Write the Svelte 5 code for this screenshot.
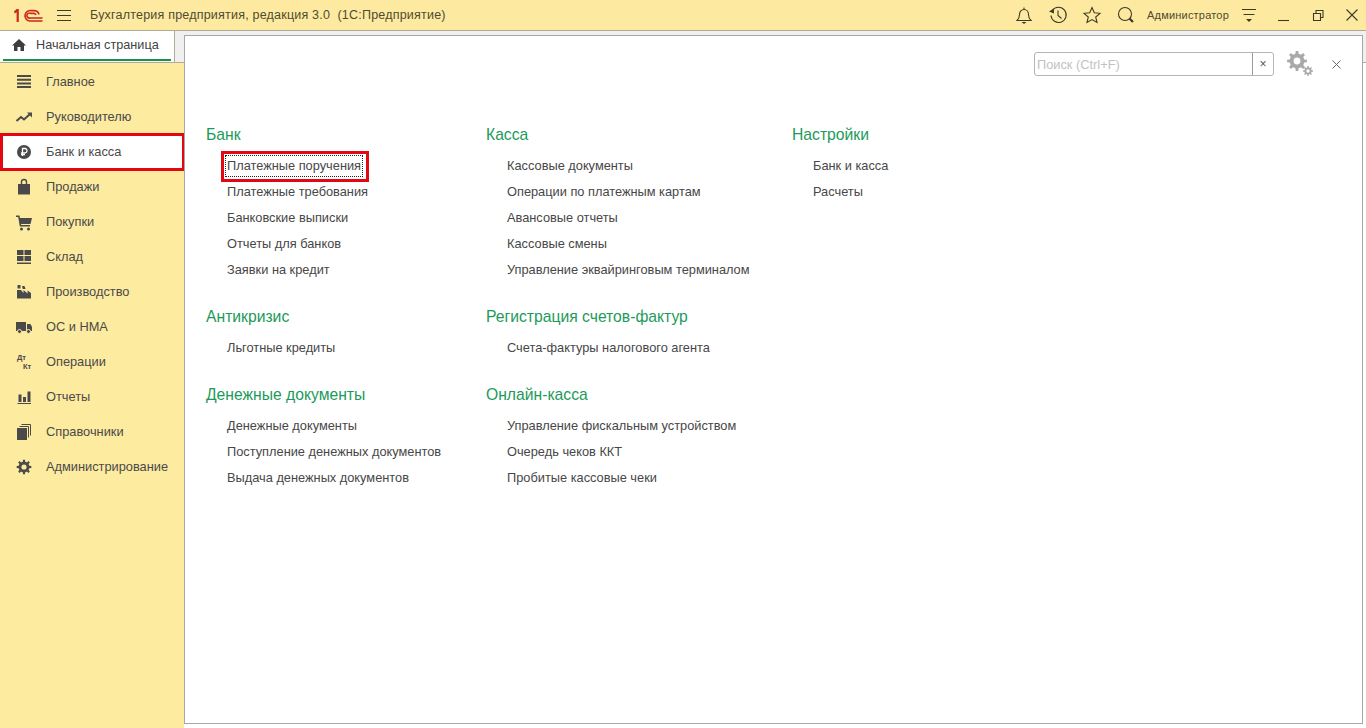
<script>
  function gear(cx, cy, R, r, hole, teeth = 8) {
    let d = '';
    const step = (Math.PI * 2) / teeth;
    for (let i = 0; i < teeth; i++) {
      const a = i * step;
      const pts = [
        [r, a - step * 0.5],
        [r, a - step * 0.27],
        [R, a - step * 0.17],
        [R, a + step * 0.17],
        [r, a + step * 0.27]
      ];
      for (const [rad, t] of pts) {
        d += (d ? 'L' : 'M') + (cx + rad * Math.cos(t)).toFixed(2) + ' ' + (cy + rad * Math.sin(t)).toFixed(2);
      }
    }
    d += `Z M${cx - hole} ${cy}a${hole} ${hole} 0 1 0 ${hole * 2} 0a${hole} ${hole} 0 1 0 ${-hole * 2} 0Z`;
    return d;
  }

  const nav = [
    { label: 'Главное', icon: 'menu' },
    { label: 'Руководителю', icon: 'trend' },
    { label: 'Банк и касса', icon: 'ruble', active: true },
    { label: 'Продажи', icon: 'bag' },
    { label: 'Покупки', icon: 'cart' },
    { label: 'Склад', icon: 'grid' },
    { label: 'Производство', icon: 'factory' },
    { label: 'ОС и НМА', icon: 'truck' },
    { label: 'Операции', icon: 'dtkt' },
    { label: 'Отчеты', icon: 'bars' },
    { label: 'Справочники', icon: 'books' },
    { label: 'Администрирование', icon: 'gear' }
  ];

  const columns = [
    [
      { title: 'Банк', links: ['Платежные поручения', 'Платежные требования', 'Банковские выписки', 'Отчеты для банков', 'Заявки на кредит'] },
      { title: 'Антикризис', links: ['Льготные кредиты'] },
      { title: 'Денежные документы', links: ['Денежные документы', 'Поступление денежных документов', 'Выдача денежных документов'] }
    ],
    [
      { title: 'Касса', links: ['Кассовые документы', 'Операции по платежным картам', 'Авансовые отчеты', 'Кассовые смены', 'Управление эквайринговым терминалом'] },
      { title: 'Регистрация счетов-фактур', links: ['Счета-фактуры налогового агента'] },
      { title: 'Онлайн-касса', links: ['Управление фискальным устройством', 'Очередь чеков ККТ', 'Пробитые кассовые чеки'] }
    ],
    [
      { title: 'Настройки', links: ['Банк и касса', 'Расчеты'] }
    ]
  ];

  const navGear = gear(10, 10, 7.4, 5.4, 2.6);
  const bigGear = gear(11, 10, 10, 7.4, 3.4);
  const smallGear = gear(22, 20, 5, 3.6, 1.7);
</script>

<div class="shell">
  <header class="topbar">
    <svg class="logo" viewBox="0 0 30 15" width="30" height="15" aria-hidden="true">
      <path class="logo-red" d="M1 3.500 3.600 1H5.800V14H3.600V4.200L1.600 5.600Z" />
      <path class="logo-line" d="M29.500 13H16.500A5.200 5.200 0 1 1 18 2.600H21.500A5 5 0 0 1 26 6.500" />
      <path class="logo-line" d="M29.500 10H17A2.500 2.500 0 1 1 17.600 5.400H21A2.600 2.600 0 0 1 23 7" />
    </svg>
    <svg class="burger" viewBox="0 0 14 11" width="14" height="11" aria-hidden="true">
      <path d="M0 .5H14M0 5.500H14M0 10.500H14" />
    </svg>
    <span class="title">Бухгалтерия предприятия, редакция 3.0&nbsp; (1С:Предприятие)</span>
    <div class="tools">
      <svg class="tool" viewBox="0 0 20 20" aria-hidden="true">
        <path d="M3 15.500C5 13.500 5.500 12 5.500 9.500C5.500 6.500 7.500 4.500 10 4.500S14.500 6.500 14.500 9.500C14.500 12 15 13.500 17 15.500ZM10 2.500V4.500" />
        <path class="solid" d="M7.500 17H12.500L10 19Z" />
      </svg>
      <svg class="tool" viewBox="0 0 20 20" aria-hidden="true">
        <path d="M4.300 5.600A7.600 7.600 0 1 1 3 10.500" />
        <path class="solid" d="M1 6.500 5.800 3.500 6 8.500Z" />
        <path d="M10 5.500V10.500L13.500 13.500" />
      </svg>
      <svg class="tool" viewBox="0 0 20 20" aria-hidden="true">
        <path d="M10 2.500 12.300 7.700 18 8.300 13.700 12 15 17.500 10 14.600 5 17.500 6.300 12 2 8.300 7.700 7.700Z" />
      </svg>
      <svg class="tool" viewBox="0 0 20 20" aria-hidden="true">
        <circle cx="9" cy="9" r="6.500" />
        <path class="thick" d="M13.500 13.500 17 17" />
      </svg>
      <span class="user">Администратор</span>
      <svg class="tool filter" viewBox="0 0 16 16" aria-hidden="true">
        <path d="M1 2.500H15M2.500 7.500H13.500" />
        <path class="solid" d="M5 12H11L8 15Z" />
      </svg>
      <div class="win">
        <svg viewBox="0 0 14 14" width="14" height="14" aria-hidden="true"><path d="M1 12.500H12" /></svg>
        <svg viewBox="0 0 14 14" width="14" height="14" aria-hidden="true"><path d="M2.500 5.500H9.500V12.500H2.500ZM5 5.500V2.500H12V9.500H9.500" /></svg>
        <svg viewBox="0 0 14 14" width="14" height="14" aria-hidden="true"><path d="M1.500 1.500 12.500 12.500M12.500 1.500 1.500 12.500" /></svg>
      </div>
    </div>
  </header>

  <div class="body">
    <aside class="side">
      <div class="tabrow">
        <div class="tab">
          <svg viewBox="0 0 14 12" width="14" height="12" aria-hidden="true">
            <path d="M7 0 14 6.500H12V12H8.500V8H5.500V12H2V6.500H0Z" />
          </svg>
          <span>Начальная страница</span>
        </div>
      </div>
      <nav class="nav">
        {#each nav as item}
          <div class="nav-item" class:active={item.active}>
            <svg class="nav-icon" viewBox="0 0 20 20" width="20" height="20" aria-hidden="true">
              {#if item.icon === 'menu'}
                <path d="M3 3H17V5H3ZM3 6.700H17V8.700H3ZM3 10.400H17V12.400H3ZM3 14.100H17V16.100H3Z" />
              {:else if item.icon === 'trend'}
                <path class="line" d="M2.500 14 7 10 10 12.500 15.500 7.500" />
                <path d="M13 5.500H18V10.500Z" />
              {:else if item.icon === 'ruble'}
                <circle cx="10" cy="10" r="7" />
                <path class="ruble" d="M8.500 14V6.500H11.300A2.200 2.200 0 0 1 11.300 10.800H7M7 12.500H11" />
              {:else if item.icon === 'bag'}
                <path d="M4 7H16V17.500H4Z" />
                <path class="line thin-bag" d="M7.500 9V5A2.500 2.500 0 0 1 12.500 5V9" />
              {:else if item.icon === 'cart'}
                <path d="M2 3.500H5.500L6 6H18L16.500 12H7L7.200 13H16V14.500H5.800L4.200 5H2Z" />
                <circle cx="7.500" cy="17" r="1.500" />
                <circle cx="14.500" cy="17" r="1.500" />
              {:else if item.icon === 'grid'}
                <path d="M3 3H9.500V8H3ZM10.500 3H17V8H10.500ZM3 9H9.500V14H3ZM10.500 9H17V14H10.500ZM3 15.500H17V17H3Z" />
              {:else if item.icon === 'factory'}
                <path d="M3 16.500V8H7L9.500 11V8L13.500 11.500V8.500L17 11V16.500Z" />
                <path d="M3.500 3H6.500V6.500H3.500ZM8 4H10.500L11.500 7H8.800Z" />
              {:else if item.icon === 'truck'}
                <path d="M2 5H12V14H2ZM13 7H16.500L18 10V14H13Z" />
                <circle class="wheel" cx="5.500" cy="14.500" r="2" />
                <circle class="wheel" cx="14.500" cy="14.500" r="2" />
              {:else if item.icon === 'dtkt'}
                <text class="dk" x="3" y="8">Дт</text>
                <text class="dk" x="9" y="16.500">Кт</text>
              {:else if item.icon === 'bars'}
                <path d="M4.500 7.500H7.500V15H4.500ZM9 10H12V15H9ZM13.500 4.500H16.500V15H13.500ZM3.500 16H17V17H3.500Z" />
              {:else if item.icon === 'books'}
                <path d="M3 6H13V18H3Z" />
                <path class="line thin" d="M5.500 4.500H14.500V15.500M7.500 2.500H16.500V13.500" />
              {:else if item.icon === 'gear'}
                <path fill-rule="evenodd" d={navGear} />
              {/if}
            </svg>
            <span>{item.label}</span>
          </div>
        {/each}
      </nav>
    </aside>

    <div class="work">
      <main class="panel">
        <div class="panel-tools">
          <div class="search">
            <span class="placeholder">Поиск (Ctrl+F)</span>
            <span class="clear">×</span>
          </div>
          <svg class="gears" viewBox="0 0 28 26" width="28" height="26" aria-hidden="true">
            <path fill-rule="evenodd" d={bigGear} />
            <path fill-rule="evenodd" d={smallGear} />
          </svg>
          <svg class="close" viewBox="0 0 9 9" width="9" height="9" aria-hidden="true">
            <path d="M.5 .5 8.500 8.500M8.500 .5 .5 8.500" />
          </svg>
        </div>
        <div class="columns">
          {#each columns as col}
            <div class="col">
              {#each col as sec}
                <section>
                  <h3>{sec.title}</h3>
                  <ul>
                    {#each sec.links as link}
                      <li>
                        {#if link === 'Платежные поручения'}
                          <span class="focused">{link}</span>
                        {:else}
                          {link}
                        {/if}
                      </li>
                    {/each}
                  </ul>
                </section>
              {/each}
            </div>
          {/each}
        </div>
      </main>
    </div>
  </div>
</div>

<style>
  :global(body) {
    margin: 0;
    background: #fff;
    overflow: hidden;
  }
  .shell {
    width: 1366px;
    height: 728px;
    display: flex;
    flex-direction: column;
    font-family: "Liberation Sans", Arial, sans-serif;
    font-size: 13px;
    color: #4a4a4a;
    overflow: hidden;
  }

  /* top bar */
  .topbar {
    height: 30px;
    flex: none;
    display: flex;
    align-items: center;
    background: #fdeaa0;
    border-bottom: 1px solid #b0ab94;
    padding-left: 13px;
    color: #4e4a30;
  }
  .logo { flex: none; margin-right: 14px; }
  .logo-red { fill: #c8281e; }
  .logo-line { fill: none; stroke: #c8281e; stroke-width: 1.600; }
  .burger { flex: none; margin-right: 19px; }
  .burger path { stroke: #3c3a28; fill: none; }
  .title { font-size: 12.500px; letter-spacing: .21px; white-space: nowrap; }
  .tools {
    margin-left: auto;
    display: flex;
    align-items: center;
    height: 100%;
  }
  .tool {
    width: 20px;
    height: 20px;
    margin-right: 14px;
    fill: none;
    stroke: #3c3a28;
    stroke-width: 1.100;
  }
  .tool .solid { fill: #3c3a28; stroke: none; }
  .tool .thick { stroke-width: 2.200; }
  .user { font-size: 11px; letter-spacing: .2px; margin: 0 12px 0 -3px; }
  .tool.filter { width: 16px; height: 16px; margin-right: 0; }
  .win { display: flex; gap: 20px; margin: 0 7px 0 20px; }
  .win svg { fill: none; stroke: #3c3a28; stroke-width: 1.100; }

  /* body */
  .body { flex: 1; display: flex; min-height: 0; }
  .side {
    width: 184px;
    flex: none;
    display: flex;
    flex-direction: column;
    background: #fdeba0;
  }
  .tabrow {
    height: 31px;
    flex: none;
    background: #f0f0f0;
    border-bottom: 1px solid #b0ab94;
    display: flex;
  }
  .tab {
    width: 175px;
    box-sizing: border-box;
    background: #fff;
    border-right: 1px solid #b0ab94;
    display: flex;
    align-items: center;
    gap: 10px;
    padding: 0 0 3px 12px;
    position: relative;
    color: #444;
    font-size: 12.700px;
  }
  .tab::after {
    content: "";
    position: absolute;
    left: 3px;
    right: 3px;
    bottom: 1px;
    height: 2px;
    background: #1d8f55;
  }
  .tab svg { fill: #3e3e3e; flex: none; }
  .nav { padding-top: 1px; }
  .nav-item {
    height: 35px;
    display: flex;
    align-items: center;
    gap: 12px;
    padding-left: 14px;
    box-sizing: border-box;
    font-size: 12.800px;
    white-space: nowrap;
  }
  .nav-item.active {
    background: #fff;
    border: 3px solid #e30613;
    height: 38px;
    margin: -1px -1px -2px 0;
    padding: 0 0 1px 11px;
    position: relative;
  }
  .nav-icon { flex: none; fill: #4a4a4a; }
  .nav-icon .line { fill: none; stroke: #4a4a4a; stroke-width: 2; }
  .nav-icon .line.thin { stroke-width: 1; }
  .nav-icon .line.thin-bag { stroke-width: 1.400; }
  .nav-icon .ruble { fill: none; stroke: #fff; stroke-width: 1.300; }
  .nav-icon .wheel { stroke: #fdeba0; stroke-width: 1; }
  .nav-icon .dk { font-size: 7.500px; font-weight: 700; font-family: "Liberation Sans", Arial, sans-serif; }

  /* workspace */
  .work {
    flex: 1;
    min-width: 0;
    box-sizing: border-box;
    padding: 4px 3px 4px 0;
    background: linear-gradient(#f0f0f0 0 31px, #b0b0b0 31px 32px, #fff 32px);
    display: flex;
  }
  .panel {
    flex: 1;
    background: #fff;
    border: 1px solid #a8a8a8;
    position: relative;
  }
  .panel-tools {
    display: flex;
    align-items: center;
    justify-content: flex-end;
    height: 24px;
    margin-top: 16px;
    padding-right: 21px;
  }
  .search {
    width: 240px;
    height: 24px;
    box-sizing: border-box;
    border: 1px solid #b5b5b5;
    border-radius: 3px;
    display: flex;
    align-items: center;
    justify-content: space-between;
    font-size: 12.800px;
  }
  .placeholder { color: #c2c2c2; padding: 1px 0 0 2px; }
  .clear {
    width: 21px;
    height: 100%;
    box-sizing: border-box;
    border-left: 1px solid #999;
    display: flex;
    align-items: center;
    justify-content: center;
    color: #555;
    font-size: 12px;
  }
  .gears { fill: #a9a9a9; margin-left: 12px; }
  .close { margin-left: 18px; fill: none; stroke: #666; stroke-width: 1; }

  .columns {
    display: grid;
    grid-template-columns: 280px 306px 1fr;
    padding: 46px 0 0 21px;
  }
  section { margin-bottom: 21px; }
  h3 {
    margin: 0 0 5px;
    height: 26px;
    line-height: 26px;
    font-weight: 400;
    font-size: 15.700px;
    color: #1c9a5a;
  }
  ul { list-style: none; margin: 0; padding: 0 0 0 21px; }
  li { height: 26px; line-height: 26px; white-space: nowrap; font-size: 12.800px; color: #474747; }
  .focused {
    display: inline-block;
    position: relative;
    outline: 1px dotted #222;
    outline-offset: 0;
    line-height: 20px;
    padding: 0 1px 0 1px;
    margin-left: -1px;
  }
  .focused::after {
    content: "";
    position: absolute;
    left: -5px;
    right: -7px;
    top: -5px;
    bottom: -6px;
    border: 3px solid #e30613;
  }
</style>
